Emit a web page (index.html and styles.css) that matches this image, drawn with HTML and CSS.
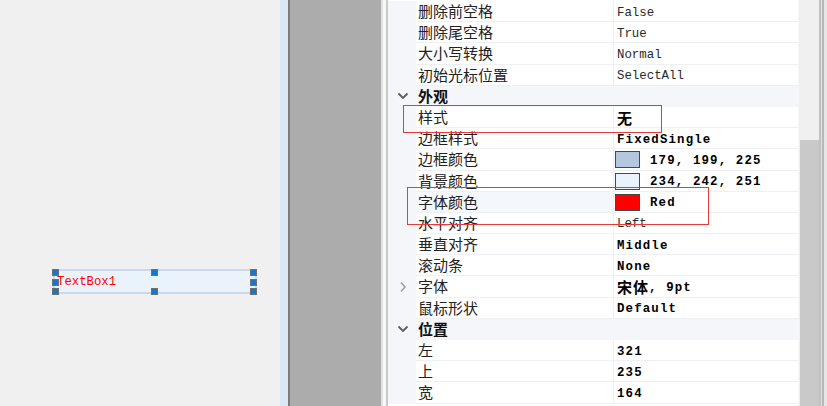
FILE: index.html
```html
<!DOCTYPE html>
<html lang="zh-CN">
<head>
    <meta charset="UTF-8">
    <title>属性</title>
    <link rel="stylesheet" href="styles.css">
</head>
<body>
<div class="window">
    <div class="designer">
        <div class="textbox">TextBox1</div>
        <span class="handle h-tl"></span>
        <span class="handle h-tm"></span>
        <span class="handle h-tr"></span>
        <span class="handle h-ml"></span>
        <span class="handle h-mr"></span>
        <span class="handle h-bl"></span>
        <span class="handle h-bm"></span>
        <span class="handle h-br"></span>
    </div>
    <div class="split-blue"></div>
    <div class="split-dark"></div>
    <div class="dock-gap"></div>
    <div class="edge"></div>

    <div class="grid">
        <div class="row"><div class="gutter"></div><div class="name">删除前空格</div><div class="value">False</div></div>
        <div class="row"><div class="gutter"></div><div class="name">删除尾空格</div><div class="value">True</div></div>
        <div class="row"><div class="gutter"></div><div class="name">大小写转换</div><div class="value">Normal</div></div>
        <div class="row"><div class="gutter"></div><div class="name">初始光标位置</div><div class="value">SelectAll</div></div>
        <div class="row category">
            <div class="gutter"><svg class="chev" width="12" height="8" viewBox="0 0 12 8"><path d="M1.5 1.5 L6 6 L10.5 1.5" fill="none" stroke="#5a5a5a" stroke-width="1.8"/></svg></div>
            <div class="cat-title">外观</div>
        </div>
        <div class="row"><div class="gutter"></div><div class="name">样式</div><div class="value set"><span class="cjk">无</span></div></div>
        <div class="row"><div class="gutter"></div><div class="name">边框样式</div><div class="value set">FixedSingle</div></div>
        <div class="row"><div class="gutter"></div><div class="name">边框颜色</div><div class="value set"><span class="swatch sw-border"></span>179, 199, 225</div></div>
        <div class="row"><div class="gutter"></div><div class="name">背景颜色</div><div class="value set"><span class="swatch sw-back"></span>234, 242, 251</div></div>
        <div class="row hot"><div class="gutter"></div><div class="name">字体颜色</div><div class="value set"><span class="swatch sw-red"></span>Red</div></div>
        <div class="row"><div class="gutter"></div><div class="name">水平对齐</div><div class="value">Left</div></div>
        <div class="row"><div class="gutter"></div><div class="name">垂直对齐</div><div class="value set">Middle</div></div>
        <div class="row"><div class="gutter"></div><div class="name">滚动条</div><div class="value set">None</div></div>
        <div class="row">
            <div class="gutter"><svg class="chev" width="8" height="12" viewBox="0 0 8 12"><path d="M2 1.5 L6 6 L2 10.5" fill="none" stroke="#a0a0a0" stroke-width="1.6"/></svg></div>
            <div class="name">字体</div><div class="value set"><span class="cjk">宋体</span>, 9pt</div>
        </div>
        <div class="row"><div class="gutter"></div><div class="name">鼠标形状</div><div class="value set">Default</div></div>
        <div class="row category">
            <div class="gutter"><svg class="chev" width="12" height="8" viewBox="0 0 12 8"><path d="M1.5 1.5 L6 6 L10.5 1.5" fill="none" stroke="#5a5a5a" stroke-width="1.8"/></svg></div>
            <div class="cat-title">位置</div>
        </div>
        <div class="row"><div class="gutter"></div><div class="name">左</div><div class="value set">321</div></div>
        <div class="row"><div class="gutter"></div><div class="name">上</div><div class="value set">235</div></div>
        <div class="row"><div class="gutter"></div><div class="name">宽</div><div class="value set">164</div></div>
    </div>

    <div class="scrollbar"><div class="thumb"></div></div>
    <div class="frame"></div>

    <div class="mark mark-style"></div>
    <div class="mark mark-fore"></div>
</div>
</body>
</html>
```

FILE: styles.css
```css
body {
    margin: 0;
    overflow: hidden;
    font-family: "Noto Sans CJK SC", sans-serif;
}

.window {
    position: relative;
    display: flex;
    height: 406px;
    overflow: hidden;
}

/* design surface */
.designer {
    position: relative;
    width: 280px;
    background-color: #f0f0f0;
}

.textbox {
    position: absolute;
    left: 53px;
    top: 269px;
    width: 204px;
    height: 25px;
    box-sizing: border-box;
    border: 2px solid #c9d8ec;
    background-color: #eaf2fb;
    color: #ff0000;
    font-family: "Liberation Mono", monospace;
    font-size: 12.3px;
    line-height: 23px;
    padding-left: 2px;
}

.handle {
    position: absolute;
    width: 7px;
    height: 7px;
    box-sizing: border-box;
    border: 1px solid #6f6f6f;
    background-color: #1677d2;
}

.h-tl { left: 52px; top: 269px; }
.h-tm { left: 151px; top: 269px; }
.h-tr { left: 250px; top: 269px; }
.h-ml { left: 52px; top: 279px; }
.h-mr { left: 250px; top: 279px; }
.h-bl { left: 52px; top: 288px; }
.h-bm { left: 151px; top: 288px; }
.h-br { left: 250px; top: 288px; }

.split-blue {
    width: 8px;
    background-color: #dbe7f4;
}

.split-dark {
    width: 2px;
    background-color: #7c7c7c;
}

.dock-gap {
    width: 91px;
    background-color: #acacac;
}

.edge {
    width: 7px;
    background: linear-gradient(to right, #e2e2e2 0, #e2e2e2 2px, #f7f7f7 2px, #f7f7f7 5px, #c9c9c9 5px);
}

/* property grid */
.grid {
    width: 410px;
    background-color: #ffffff;
    padding-top: 1px;
}

.row {
    display: grid;
    grid-template-columns: 28px 198px 1fr;
    height: 21.2px;
}

.gutter {
    background-color: #f4f6fa;
    display: flex;
    align-items: center;
    justify-content: center;
    padding-left: 2px;
}

.name,
.value,
.cat-title {
    border-bottom: 1px solid #eef0f5;
    line-height: 20px;
    white-space: nowrap;
    overflow: hidden;
}

.name {
    padding-left: 2px;
    font-size: 15px;
    color: #222;
    border-right: 1px solid #eef0f5;
}

.value {
    display: flex;
    align-items: center;
    padding-left: 3px;
    padding-top: 3px;
    font-family: "Liberation Mono", monospace;
    font-size: 12.4px;
    color: #2a2a2a;
}

.value.set {
    font-weight: bold;
    color: #000;
    letter-spacing: 1.15px;
}

.cjk {
    font-family: "Noto Sans CJK SC", sans-serif;
    font-size: 15px;
    letter-spacing: 1px;
    margin-top: -2px;
}

.row.hot .name {
    background-color: #f4f7fb;
}

.category .cat-title {
    grid-column: 2 / 4;
    background-color: #f4f6fa;
    padding-left: 2px;
    font-size: 15px;
    font-weight: bold;
    color: #111;
    border-bottom-color: #f4f6fa;
}

.swatch {
    width: 25px;
    height: 17px;
    box-sizing: border-box;
    border: 1px solid #474747;
    margin-left: -2px;
    margin-right: 10px;
    margin-top: -2px;
    flex-shrink: 0;
}

.sw-border { background-color: #b3c7e1; }
.sw-back { background-color: #eaf2fb; }
.sw-red { background-color: #ff0000; }

.scrollbar {
    width: 20px;
    background-color: #f0f0f0;
    border-left: 1px solid #f6f6f6;
    display: flex;
    flex-direction: column;
}

.thumb {
    margin-top: 140px;
    flex: 1;
    background-color: #c9c9c9;
    margin-left: 1px;
}

.frame {
    flex: 1;
    background: linear-gradient(to right, #c0c0c0 0, #c0c0c0 2px, #e2e2e2 2px, #e2e2e2 3.5px, #b8b8b8 3.5px, #b8b8b8 5px, #e6e6e6 5px);
}

/* annotation boxes */
.mark {
    position: absolute;
    border: 1px solid #e53b3b;
    box-sizing: border-box;
}

.mark-style {
    left: 403px;
    top: 105px;
    width: 259px;
    height: 28px;
}

.mark-fore {
    left: 407px;
    top: 187px;
    width: 302px;
    height: 38px;
}
```
